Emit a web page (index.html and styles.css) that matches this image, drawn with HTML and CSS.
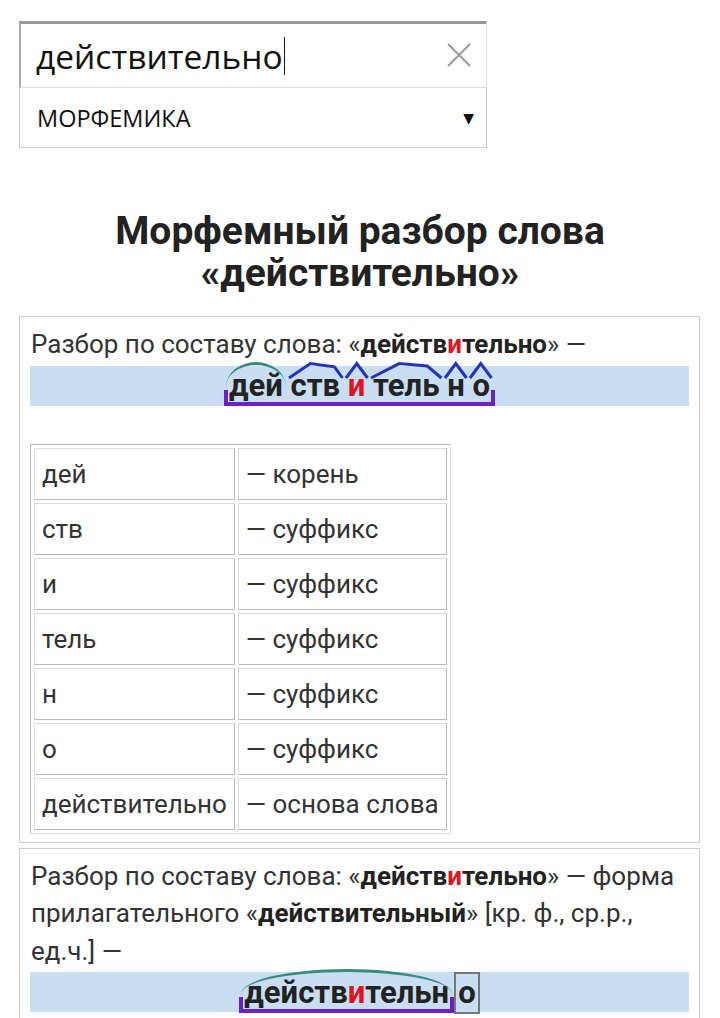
FILE: index.html
```html
<!DOCTYPE html>
<html>
<head>
    <meta charset="UTF-8">
    <title>Морфемный разбор слова «действительно»</title>
    <link rel="stylesheet" href="styles.css">
</head>
<body>
    <div class="search">
        <div class="search-input">
            <span class="search-text">действительно</span><span class="caret"></span>
            <svg class="clear-icon" width="26" height="26" viewBox="0 0 26 26">
                <path d="M2 2 L24 24 M24 2 L2 24" stroke="#9a9a9a" stroke-width="2" fill="none"/>
            </svg>
        </div>
        <div class="search-select">
            <span>МОРФЕМИКА</span>
            <span class="select-arrow">▼</span>
        </div>
    </div>

    <h1 class="title">Морфемный разбор слова<br>«действительно»</h1>

    <div class="card">
        <p class="card-text">Разбор по составу слова: «<b>действ<span class="stress">и</span>тельно</b>» —</p>
        <div class="morph-band">
            <span class="stem"><span class="m root">дей</span> <span class="m suffix">ств<svg class="roof" viewBox="0 0 100 20" preserveAspectRatio="none"><polyline points="0,20 40,2 85,6 100,20"/></svg></span> <span class="m suffix"><span class="stress">и</span><svg class="roof" viewBox="0 0 100 20" preserveAspectRatio="none"><polyline points="0,20 50,2 100,20"/></svg></span> <span class="m suffix">тель<svg class="roof" viewBox="0 0 100 20" preserveAspectRatio="none"><polyline points="0,20 40,2 80,5 100,20"/></svg></span> <span class="m suffix">н<svg class="roof" viewBox="0 0 100 20" preserveAspectRatio="none"><polyline points="0,20 50,2 100,20"/></svg></span> <span class="m suffix">о<svg class="roof" viewBox="0 0 100 20" preserveAspectRatio="none"><polyline points="0,20 50,2 100,20"/></svg></span></span>
        </div>

        <table class="morph-table">
            <tr><td>дей</td><td>— корень</td></tr>
            <tr><td>ств</td><td>— суффикс</td></tr>
            <tr><td>и</td><td>— суффикс</td></tr>
            <tr><td>тель</td><td>— суффикс</td></tr>
            <tr><td>н</td><td>— суффикс</td></tr>
            <tr><td>о</td><td>— суффикс</td></tr>
            <tr><td>действительно</td><td>— основа слова</td></tr>
        </table>
    </div>

    <div class="card">
        <p class="card-text">Разбор по составу слова: «<b>действ<span class="stress">и</span>тельно</b>» — форма прилагательного «<b>действительный</b>» [кр. ф., ср.р., ед.ч.] —</p>
        <div class="morph-band">
            <span class="stem"><span class="m root">действ<span class="stress">и</span>тельн</span></span><span class="ending">о</span>
        </div>
    </div>
</body>
</html>
```

FILE: styles.css
```css
body {
    margin: 0;
    padding: 21px 0 0 19px;
    font-family: Roboto, "Liberation Sans", sans-serif;
    color: #333;
    background: #fff;
}
.search {
    width: 468px;
}
.search-input {
    position: relative;
    display: flex;
    align-items: center;
    height: 63px;
    padding-left: 15px;
    border-top: 3px solid #999;
    border-left: 2px solid #aaa;
    border-right: 1px solid #ddd;
    border-bottom: 1px solid #ddd;
    font-family: "Open Sans", "DejaVu Sans", sans-serif;
    font-size: 33.5px;
    color: #111;
}
.caret {
    display: inline-block;
    width: 1px;
    height: 38px;
    margin-left: 1px;
    background: #111;
}
.clear-icon {
    position: absolute;
    right: 14px;
    top: 18px;
}
.search-select {
    display: flex;
    align-items: center;
    justify-content: space-between;
    height: 59px;
    padding: 0 12px 0 17px;
    border: 1px solid #ccc;
    border-top: none;
    font-family: "Open Sans", "DejaVu Sans", sans-serif;
    font-size: 23.5px;
    color: #111;
}
.select-arrow {
    font-size: 14px;
}
.title {
    margin: 62px 0 22px -19px;
    width: 720px;
    text-align: center;
    font-size: 39px;
    line-height: 42px;
    font-weight: bold;
    color: #222;
}
.card {
    width: 659px;
    padding: 9px 10px 8px 10px;
    border: 1px solid #ccc;
    margin-bottom: 5px;
}
.card-text {
    margin: 0 0 0 1px;
    font-size: 26px;
    line-height: 37.5px;
}
.card-text b {
    color: #222;
}
.stress {
    color: #e0141e;
}
.morph-band {
    margin-top: 2px;
    height: 40px;
    line-height: 40px;
    background: #c9def2;
    text-align: center;
    font-size: 31px;
    font-weight: bold;
    color: #222;
}
.stem {
    position: relative;
    display: inline-block;
    padding: 0 5px;
}
.stem::after {
    content: "";
    position: absolute;
    left: 0;
    right: 0;
    bottom: 0;
    height: 12px;
    border: 4px solid #6b21c8;
    border-top: none;
}
.m {
    position: relative;
    display: inline-block;
}
.root::before {
    content: "";
    position: absolute;
    left: -3px;
    right: -3px;
    top: -4px;
    height: 22px;
    border-top: 3px solid #3a8c7a;
    border-radius: 50% 50% 0 0 / 100% 100% 0 0;
}
.roof {
    position: absolute;
    left: -2px;
    top: -4px;
    width: calc(100% + 4px);
    height: 16px;
    overflow: visible;
}
.roof polyline {
    fill: none;
    stroke: #2432c0;
    stroke-width: 3px;
    vector-effect: non-scaling-stroke;
}
.ending {
    display: inline-block;
    line-height: 38px;
    padding: 0 2px;
    border: 2px solid #777;
}
.morph-table {
    margin-top: 38px;
    border: 1px solid #bbb;
    border-right-color: #ddd;
    border-bottom-color: #ddd;
    border-spacing: 3px;
    font-size: 26px;
}
.morph-table td {
    height: 50px;
    padding: 0 7px;
    border: 1px solid #bbb;
    border-top-color: #ddd;
    border-left-color: #ddd;
    color: #333;
}
```
